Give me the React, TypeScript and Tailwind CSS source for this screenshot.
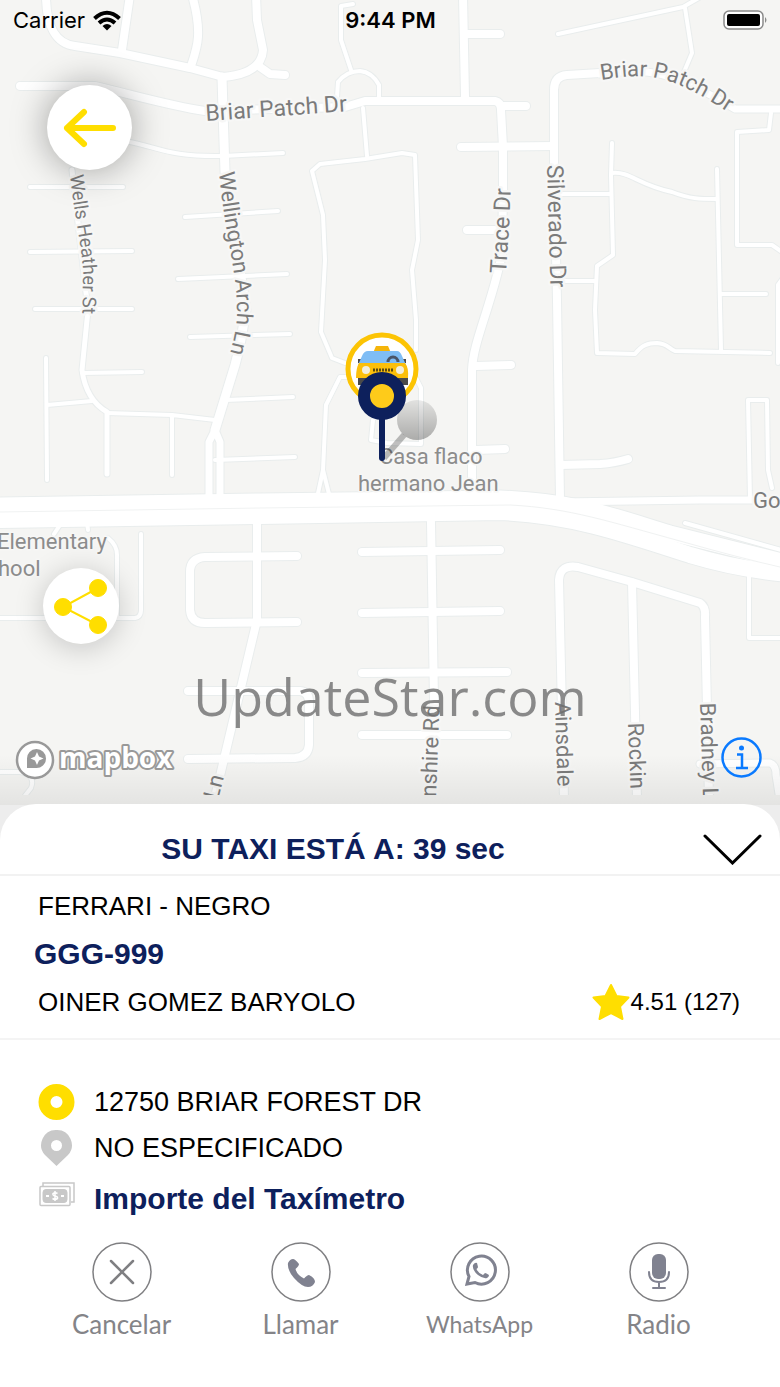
import React, { useState } from "react";

// [path, stroke width]
const roads: [string, number][] = [
    ["M46 -5C46 26 56 44 75 46L120 53L190 68L223 77C248 75 262 66 263 50L257 20L256 -5", 8],
    ["M260 67L270 74L285 75", 8],
    ["M130 -5L122 50", 8],
    ["M192 -5C203 34 197 48 191 66", 8],
    ["M222 77L223 110L225 172L246 310L240 345L235 365L215 430", 9],
    ["M215 430L209 442L209 500M215 430L220 442L220 500", 7],
    ["M20 86H95C130 94 170 106 205 111L345 107L365 101H495Q501 102 501 110L503 147V190L502 255L497 275C486 318 473 345 472 370V495", 8],
    ["M501 106H526", 8],
    ["M463 -5L465 97", 8],
    ["M465 34H500", 8],
    ["M461 147L554 146", 8],
    ["M600 73L567 75Q554 76 554 90V165L557 300L560 500", 8],
    ["M600 74C650 68 670 70 735 109H785", 7],
    ["M558 34L683 7L704 -5", 4],
    ["M685 8L692 53L684 72", 4],
    ["M771 113L769 130L737 132V245H772L785 254", 4],
    ["M612 143L611 175L613 255L597 266L595 310L597 353L635 354C642 345 648 343 657 343C668 344 668 348 675 351L770 353", 4],
    ["M612 173C630 171 638 185 672 192C690 199 700 199 717 199", 4],
    ["M717 169L721 350M722 294H766M560 194H611M560 281H596", 4],
    ["M785 275L778 285V363", 4],
    ["M467 230H500M476 366L511 365M476 450L505 449", 8],
    ["M560 465L600 464Q615 463 628 459", 8],
    ["M745 4M353 4L341 6V40L351 70", 4],
    ["M337 97L338 82Q347 71 360 71Q372 72 379 85V97", 4],
    ["M363 108L367 156", 4],
    ["M345 363L332 358L321 332L325 260L323 215L312 171L320 164L365 159L402 153L415 155L418 240L412 270L416 320V350", 4],
    ["M346 377H340L326 405L323 470L317 498M323 470L330 498", 4],
    ["M373 420L371 440L387 443L421 444V388L416 378", 4],
    ["M130 142C160 148 170 157 223 156L283 153", 4],
    ["M30 187H123M30 252L132 251M35 309H132M185 217L278 211M178 279L287 274M190 337L290 334", 4],
    ["M72 170L88 310L82 370C85 392 95 405 107 412V474", 5],
    ["M82 373L142 372M46 358L47 480M47 405L92 401M107 413L172 415L215 420M172 417V475", 4],
    ["M226 400L293 397M215 460L295 457", 4],
    ["M750 500L748 400H767L768 470L772 488", 4],
    ["M560 502L700 500L785 500", 7],
    ["M685 523L785 551", 4],
    ["M-5 505L260 501L500 498C580 501 620 518 670 533L790 563", 15],
    ["M-5 520L260 516L500 512C570 515 620 532 690 555Q740 570 790 574", 16],
    ["M257 522V620L215 797", 8],
    ["M297 556L205 557Q190 558 190 572V610Q191 623 205 623L297 622", 8],
    ["M188 691H300Q309 692 309 702V745Q308 757 295 758L188 759", 8],
    ["M362 552L500 550M362 613L500 611M362 673L507 672M362 735L507 735", 8],
    ["M431 522L434 700L430 800", 8],
    ["M-5 618H135Q141 617 141 610V534M108 538Q117 545 117 555V618M60 525L54 534M87 522L88 530", 4],
    ["M564 800L559 580Q560 564 578 567L632 582L700 603Q706 607 705 617L709 800M632 582L637 800", 8],
    ["M749 575V638H785", 4],
    ["M700 764L770 763Q776 765 776 775L780 800", 7],
    ["M-5 772H20Q36 775 31 788L24 797", 4],
];

// Street names follow the line of the road under them
const streets: { id: string; d: string; name: string; size: number }[] = [
    { id: "briar-w", d: "M206 121L380 109", name: "Briar Patch Dr", size: 23 },
    { id: "briar-e", d: "M601 80C650 72 670 73 740 120", name: "Briar Patch Dr", size: 22 },
    { id: "wells", d: "M70 175C74 215 81 240 83 270L82 340", name: "Wells Heather St", size: 19 },
    { id: "wellington", d: "M219 172C223 225 237 270 237 310C237 330 232 345 226 370", name: "Wellington Arch Ln", size: 22 },
    { id: "trace", d: "M506 274C508 240 511 215 511 150", name: "Trace Dr", size: 23 },
    { id: "silverado", d: "M547 165L551 310", name: "Silverado Dr", size: 23 },
    { id: "hampshire", d: "M436 797L441 670", name: "nshire Rd", size: 22 },
    { id: "ainsdale", d: "M555 702L558 800", name: "Ainsdale", size: 22 },
    { id: "rockin", d: "M628 723L631 800", name: "Rockin", size: 22 },
    { id: "bradney", d: "M700 703L703 797", name: "Bradney Ln", size: 22 },
    { id: "lane", d: "M218 800L236 730", name: "Ln", size: 22 },
];

const places = [
    { x: 379, y: 464, name: "Casa flaco" },
    { x: 358, y: 491, name: "hermano Jean" },
    { x: -3, y: 549, name: "Elementary" },
    { x: -2, y: 576, name: "hool" },
];

const CityMap: React.FC = () => (
    <svg
        className="absolute inset-0 h-full w-full"
        viewBox="0 0 780 840"
        preserveAspectRatio="xMidYMin slice"
        role="img"
        aria-label="Mapa del recorrido"
    >
        <defs>
            <clipPath id="tiles">
                <rect width="780" height="795" />
            </clipPath>
            <linearGradient id="pin-shadow" x1="0" y1="0" x2="0" y2="1">
                <stop offset="0" stopColor="#000" stopOpacity="0.08" />
                <stop offset="1" stopColor="#000" stopOpacity="0.3" />
            </linearGradient>
            <linearGradient id="map-fade" x1="0" y1="0" x2="0" y2="1">
                <stop offset="0" stopColor="#000" stopOpacity="0" />
                <stop offset="1" stopColor="#000" stopOpacity="0.07" />
            </linearGradient>
        </defs>
        <rect width="780" height="840" fill="#f5f5f3" />
        <g clipPath="url(#tiles)">
            <g fill="none" stroke="#e9eded" strokeLinecap="round" strokeLinejoin="round">
                {roads.map(([d, width]) => (
                    <path key={d} d={d} strokeWidth={width + 2} />
                ))}
            </g>
            <g fill="none" stroke="#fff" strokeLinecap="round" strokeLinejoin="round">
                {roads.map(([d, width]) => (
                    <path key={d} d={d} strokeWidth={width} />
                ))}
            </g>
            <path
                d="M0 512L260 508L510 505C570 508 610 522 680 541Q740 558 780 567"
                fill="none"
                stroke="#f0f2f2"
            />
            <g
                className="font-['Roboto',sans-serif]"
                fill="#7b7b7b"
                stroke="#f7f7f6"
                strokeWidth="5"
                strokeLinejoin="round"
                paintOrder="stroke"
            >
                {streets.map((street) => (
                    <React.Fragment key={street.id}>
                        <path id={street.id} d={street.d} fill="none" stroke="none" />
                        <text fontSize={street.size}>
                            <textPath href={`#${street.id}`}>{street.name}</textPath>
                        </text>
                    </React.Fragment>
                ))}
                <text x="753" y="508" fontSize="22">Go</text>
            </g>
            <g
                className="font-['Roboto',sans-serif]"
                fontSize="22"
                fill="#8c8c8c"
                stroke="#f7f7f6"
                strokeWidth="3"
                paintOrder="stroke"
            >
                {places.map((place) => (
                    <text key={place.name} x={place.x} y={place.y}>{place.name}</text>
                ))}
            </g>
        </g>
        <rect y="755" width="780" height="50" fill="url(#map-fade)" />
        <rect y="805" width="780" height="35" fill="#ededed" />

        {/* Taxi */}
        <circle cx="382" cy="369" r="34" fill="#fff" stroke="#fcc404" strokeWidth="5" />
        <path d="M376 346H388L391 353H373Z" fill="#f5b50a" />
        <path d="M358 359h48v4h-48zM358 376h10v9h-10zM398 376h10v9h-10z" fill="#4a4a4a" />
        <path d="M368 351H397Q400 351 402 356L406 365H358L362 356Q364 351 368 351Z" fill="#7fbdf5" />
        <path d="M388 362a5 5 0 0 1 10 0" fill="none" stroke="#4a5568" strokeWidth="3" />
        <path d="M359 363H405Q409 368 408 378H356Q356 368 359 363Z" fill="#fcbf0a" />
        <path d="M373 370H393" stroke="#5b4a10" strokeWidth="3" strokeDasharray="2 1" />
        <circle cx="366" cy="370" r="4" fill="#f3eedc" />
        <circle cx="400" cy="370" r="4" fill="#f3eedc" />

        {/* Pickup pin */}
        <path d="M384 458L404 435" stroke="#000" strokeOpacity="0.25" strokeWidth="6" />
        <circle cx="417" cy="420" r="20" fill="url(#pin-shadow)" />
        <path d="M382 410V458" stroke="#0d205c" strokeWidth="6" strokeLinecap="round" />
        <circle cx="382" cy="396" r="18" fill="#fecb1a" stroke="#0d205c" strokeWidth="12" />
    </svg>
);

const StatusBar: React.FC = () => (
    <div className="relative grid h-10 grid-cols-3 items-center pr-3 pl-[13px] font-['Inter',sans-serif] text-[22px] leading-none text-black">
        <div className="flex items-center gap-2">
            <span>Carrier</span>
            <svg className="h-[21px] w-7" viewBox="0 0 28 21" fill="none" stroke="#000" strokeWidth="4">
                <path d="M1.500 8.500Q14 -3 26.500 8.500M6 13Q14 6 22 13" />
                <path d="M14 20.500L9.500 16Q14 12 18.500 16Z" fill="#000" stroke="none" />
            </svg>
        </div>
        <span className="text-center font-semibold">9:44 PM</span>
        <svg className="h-5 w-[45px] justify-self-end" viewBox="0 0 45 20">
            <rect x="1" y="1" width="39" height="18" rx="5" fill="#fff" stroke="#8a8a8a" strokeWidth="1.500" />
            <rect x="4" y="4" width="33" height="12" rx="2" fill="#000" />
            <path d="M42 7Q45 10 42 13Z" fill="#8a8a8a" />
        </svg>
    </div>
);

const MapboxLogo: React.FC = () => (
    <a href="#mapbox" aria-label="mapbox" className="absolute top-[738px] left-3">
        <svg className="h-11 w-[166px]" viewBox="0 0 166 44">
            <circle cx="23" cy="22" r="18" fill="#fff" stroke="#999" strokeWidth="2.500" />
            <path d="M15 30V21A9.500 9.500 0 1 1 24 30Z" fill="#999" />
            <path d="M25 14L27 18.500L31.500 20.500L27 22.500L25 27L23 22.500L18.500 20.500L23 18.500Z" fill="#fff" />
            <text
                x="47"
                y="30"
                className="font-['Open_Sans',sans-serif]"
                fontSize="28"
                fontWeight="700"
                fill="#fff"
                stroke="#999"
                strokeWidth="4"
                strokeLinejoin="round"
                paintOrder="stroke"
            >
                mapbox
            </text>
        </svg>
    </a>
);

const tripActions = [
    {
        label: "Cancelar",
        textClass: "text-[26px]",
        icon: <path d="M19 19L41 41M41 19L19 41" stroke="#7f7f82" strokeWidth="2.500" strokeLinecap="round" />,
    },
    {
        label: "Llamar",
        textClass: "text-[26px]",
        icon: (
            <path
                d="M17 21Q19 17 22 17Q24 17 28 22Q28 24 24.500 27Q26 33 33 36.500Q36 33 38 33Q44 36 44 40Q42 45 37 45Q31 45 23 36Q16 28 17 21Z"
                fill="#808290"
            />
        ),
    },
    {
        label: "WhatsApp",
        textClass: "text-[23px]",
        icon: (
            <>
                <path
                    d="M17 42L19 34.500A14 14 0 1 1 25 40.500Z"
                    fill="none"
                    stroke="#808290"
                    strokeWidth="3"
                />
                <path
                    d="M23 23Q25 20 27 21L28 25Q28 26 26.500 27Q28 31 33 33L35 31Q36 31 39 33Q39 35 37 36Q33 37 28 33Q22 28 23 23Z"
                    fill="#808290"
                />
            </>
        ),
    },
    {
        label: "Radio",
        textClass: "text-[26px]",
        icon: (
            <>
                <rect x="23" y="12" width="14" height="25" rx="6" fill="#808290" />
                <path
                    d="M20 30Q20 40 30 40Q40 40 40 30M30 40V46M24 46H36"
                    fill="none"
                    stroke="#808290"
                    strokeWidth="2"
                    strokeLinecap="round"
                />
            </>
        ),
    },
];

const App: React.FC = () => {
    const [open, setOpen] = useState(true);

    return (
        <div className="flex min-h-screen flex-col bg-white font-['Liberation_Sans',Arial,sans-serif] text-black">
            <section className="relative h-[840px] overflow-hidden">
                <CityMap />
                <StatusBar />
                <button
                    type="button"
                    aria-label="Volver"
                    className="absolute top-[85px] left-[47px] flex size-[85px] items-center justify-center rounded-full bg-white shadow-[0_0_36px_rgba(0,0,0,0.36)]"
                >
                    <svg className="h-10 w-14" viewBox="0 0 56 40" fill="none" stroke="#ffde00" strokeWidth="6" strokeLinecap="round" strokeLinejoin="round">
                        <path d="M51 20H5M22 4L5 20L22 36" />
                    </svg>
                </button>
                <button
                    type="button"
                    aria-label="Compartir"
                    className="absolute top-[568px] left-[43px] flex size-[76px] items-center justify-center rounded-full bg-white shadow-[0_4px_30px_rgba(0,0,0,0.2)]"
                >
                    <svg className="size-14" viewBox="0 0 56 56" fill="#ffde00" stroke="#ffde00">
                        <path d="M45 10L10 29L45 47" fill="none" strokeWidth="2" />
                        <circle cx="10" cy="29" r="8.500" />
                        <circle cx="45" cy="10" r="8.500" />
                        <circle cx="45" cy="47" r="8.500" />
                    </svg>
                </button>
                <p className="absolute inset-x-0 top-[660px] text-center font-['Open_Sans',sans-serif] text-[52px] leading-[72px] text-[#6e6e6e]/80">
                    UpdateStar.com
                </p>
                <MapboxLogo />
                <button type="button" aria-label="Información" className="absolute top-[737px] right-[18px]">
                    <svg className="size-[41px]" viewBox="0 0 41 41" fill="none" stroke="#0a7aff" strokeWidth="2.500">
                        <circle cx="20.500" cy="20.500" r="19" />
                        <path d="M16 17.500H21V31M15 31H27" />
                        <circle cx="20.500" cy="11" r="2.500" fill="#0a7aff" stroke="none" />
                    </svg>
                </button>
            </section>

            <main className="relative -mt-9 flex-1 rounded-t-[36px] bg-white">
                <header className="flex h-18 items-center gap-9 border-b-2 border-[#f2f2f2] pt-5 pr-[18px]">
                    <h1 className="flex-1 text-center text-[30px] font-bold leading-9 text-[#0d205c]">
                        SU TAXI ESTÁ A: 39 sec
                    </h1>
                    <button type="button" aria-label="Mostrar detalles" aria-expanded={open} onClick={() => setOpen(!open)}>
                        <svg className="h-8 w-[60px]" viewBox="0 0 60 32" fill="none" stroke="#000" strokeWidth="3" strokeLinecap="round">
                            <path d="M3 3L30.500 30L58 3" />
                        </svg>
                    </button>
                </header>

                {open && (
                    <>
                        <section className="border-b-2 border-[#f4f4f4] pt-[6px] pr-10 pb-3 pl-[38px] text-[26px] leading-[48px]">
                            <p>FERRARI - NEGRO</p>
                            <p className="-ml-1 text-[30px] font-bold text-[#0d205c]">GGG-999</p>
                            <div className="flex items-center justify-between">
                                <p>OINER GOMEZ BARYOLO</p>
                                <p className="flex items-center text-[24px]">
                                    <svg className="size-10" viewBox="0 0 40 40" fill="#ffde00" stroke="#ffde00" strokeWidth="2" strokeLinejoin="round">
                                        <path d="M20 3L25.500 14L37.500 15.500L29 24.500L31.500 37L20 31L8.500 37L11 24.500L2.500 15.500L14.500 14Z" />
                                    </svg>
                                    4.51 (127)
                                </p>
                            </div>
                        </section>

                        <ul className="px-[38px] pt-10 text-[27px]">
                            <li className="flex h-11 items-center gap-[19px]">
                                <svg className="h-9 w-[37px]" viewBox="0 0 37 36">
                                    <circle cx="18.500" cy="18" r="12" fill="none" stroke="#ffde00" strokeWidth="12" />
                                </svg>
                                12750 BRIAR FOREST DR
                            </li>
                            <li className="flex h-12 items-center gap-[19px]">
                                <svg className="h-9 w-[37px]" viewBox="0 0 37 36">
                                    <path
                                        d="M18.500 0A15 15 0 0 1 30 25L18.500 36L7 25A15 15 0 0 1 18.500 0ZM18.500 10A5.500 5.500 0 1 0 18.500 21A5.500 5.500 0 1 0 18.500 10Z"
                                        fill="#c8c8c8"
                                        fillRule="evenodd"
                                    />
                                </svg>
                                NO ESPECIFICADO
                            </li>
                            <li className="flex h-[52px] items-center gap-[19px] text-[30px] font-bold text-[#0d205c]">
                                <svg className="h-9 w-[37px]" viewBox="0 0 37 36" fill="none" stroke="#c8c8c8">
                                    <path d="M5 6V3H36V22H33" strokeWidth="1.500" />
                                    <rect x="2" y="6.500" width="30" height="19" rx="1" strokeWidth="1.500" />
                                    <rect x="5" y="9.500" width="24" height="13" rx="3" fill="#c8c8c8" />
                                    <path d="M8 16H11M23 16H26" stroke="#fff" strokeWidth="2" />
                                    <path d="M19.500 13.500Q17 12 15 13.500Q14.500 15.500 17 16Q20 16.500 19.500 18.500Q17 20 14.500 18.500M17 11V21" stroke="#fff" strokeWidth="1.500" />
                                </svg>
                                Importe del Taxímetro
                            </li>
                        </ul>
                    </>
                )}

                <nav className="grid grid-cols-4 px-8 pt-[18px] pb-10">
                    {tripActions.map((action) => (
                        <button
                            key={action.label}
                            type="button"
                            className="flex flex-col items-center gap-1.5 font-['Lato',sans-serif] text-[#848488]"
                        >
                            <svg className="size-[60px]" viewBox="0 0 60 60">
                                <circle cx="30" cy="30" r="29" fill="none" stroke="#7f7f82" strokeWidth="1.500" />
                                {action.icon}
                            </svg>
                            <span className={`leading-8 ${action.textClass}`}>{action.label}</span>
                        </button>
                    ))}
                </nav>
            </main>
        </div>
    );
};

export default App;
